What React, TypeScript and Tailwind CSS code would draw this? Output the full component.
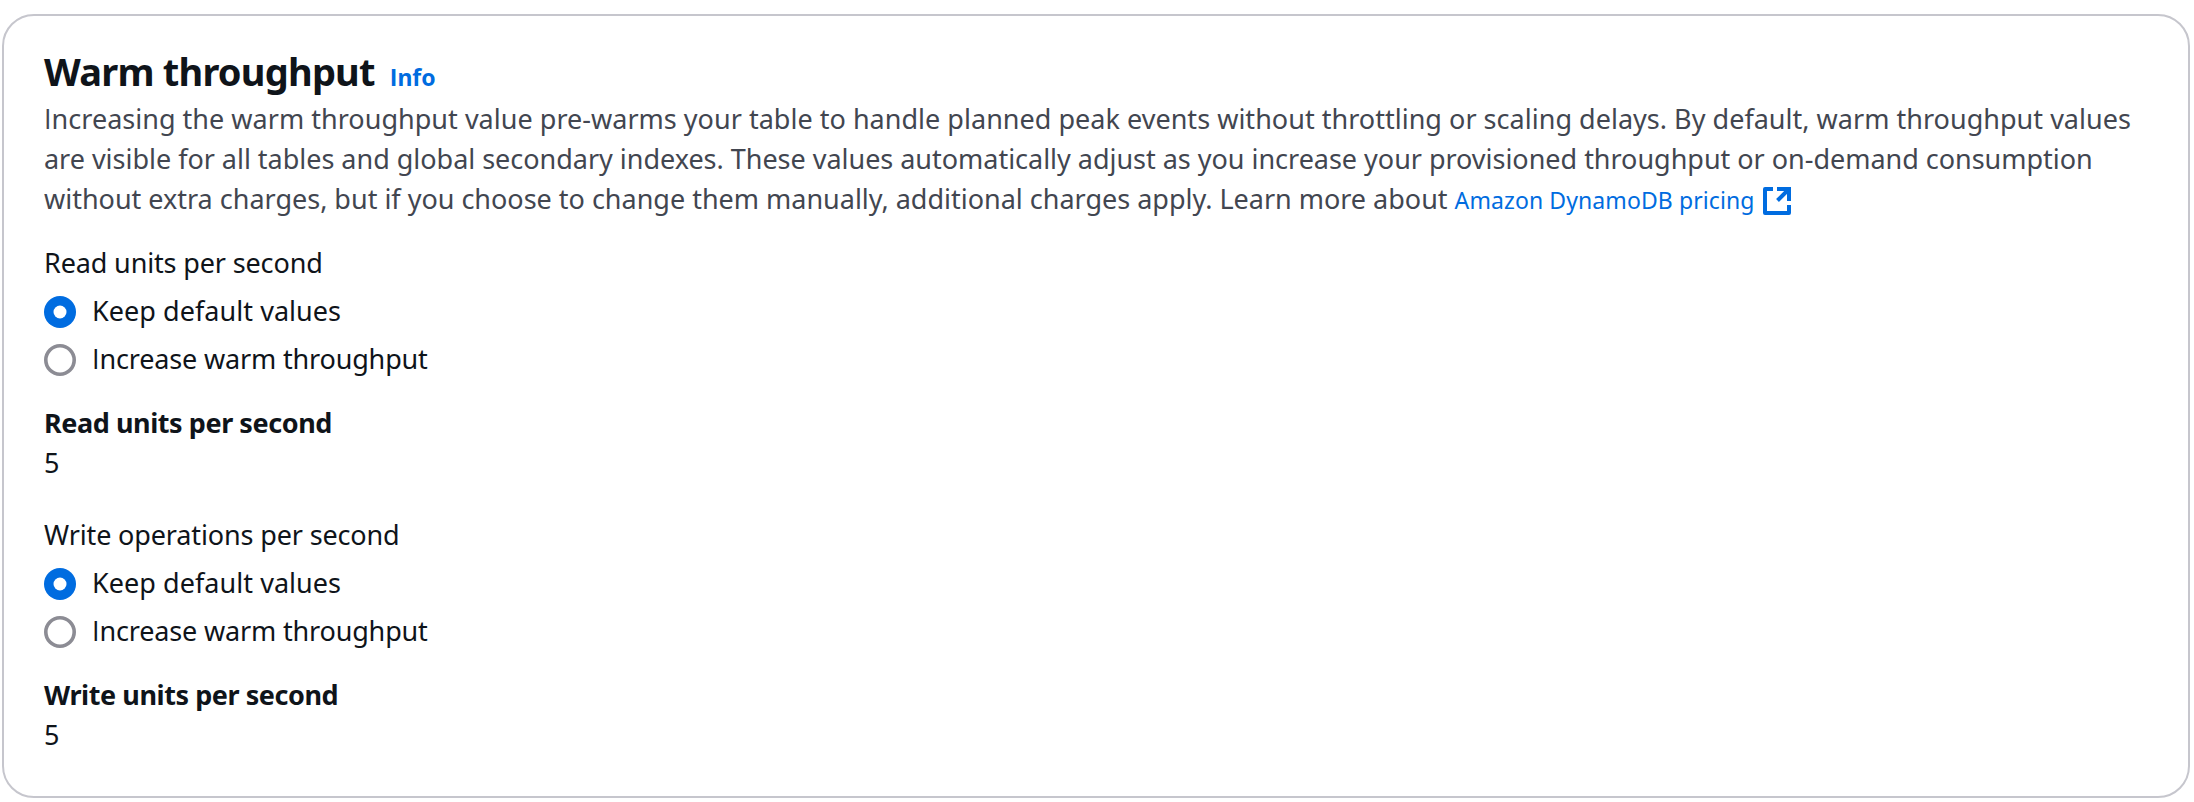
import type { ReactNode } from "react";

type FieldProps = {
  label: string;
  valueLabel: string;
  value: string;
};

// Capital I without serifs.
function PlainI() {
  return <span className="font-['Open_Sans']">I</span>;
}

function Radio({ label, checked }: { label: ReactNode; checked?: boolean }) {
  return (
    <label className="flex h-10 items-center gap-4">
      <svg viewBox="0 0 32 32" className="mt-0.5 size-8 shrink-0">
        {checked ? (
          <>
            <circle cx="16" cy="16" r="16" fill="#006ce0" />
            <circle cx="16" cy="16" r="6.5" fill="#ffffff" />
          </>
        ) : (
          <circle cx="16" cy="16" r="14.2" fill="#ffffff" stroke="#8c8c94" strokeWidth="3.6" />
        )}
      </svg>
      <span className={checked ? "tracking-[0.05px]" : "tracking-[-0.16px]"}>{label}</span>
    </label>
  );
}

function ThroughputField({ label, valueLabel, value }: FieldProps) {
  return (
    <section>
      <div className="flex flex-col gap-2">
        <p className="tracking-[-0.14px]">{label}</p>
        <Radio label="Keep default values" checked />
        <Radio
          label={
            <>
              <PlainI />
              ncrease warm throughput
            </>
          }
        />
      </div>
      <div className="mt-6">
        <p className="font-bold tracking-[-0.43px]">{valueLabel}</p>
        <p>{value}</p>
      </div>
    </section>
  );
}

function ExternalIcon() {
  return (
    <svg viewBox="0 0 28 28" className="ml-2 inline-block size-7 align-[-6px]" fill="none" stroke="#006ce0" strokeWidth="4">
      <path d="M10 2H2V26H26V18" strokeLinejoin="round" />
      <path d="M14 2H26V14M26 2L14.5 13.5" />
    </svg>
  );
}

export default function App() {
  return (
    <div className="h-[802px] w-[2194px] bg-white pt-3.5 pl-0.5 font-['Noto_Sans','Open_Sans',sans-serif] text-[27px] leading-10 text-[#0f141a]">
      <main className="h-[784px] w-[2188px] rounded-[32px] border-2 border-[#c6c6cd] px-10 pt-[31px]">
        <header>
          <div className="flex h-[52px] items-baseline">
            <h2 className="text-[38px] leading-12 font-bold tracking-[-0.78px]">Warm throughput</h2>
            <a className="ml-[15px] text-[23px] leading-8 font-bold text-[#006ce0]">
              <PlainI />
              nfo
            </a>
          </div>
          <p className="whitespace-nowrap text-[#424650]">
            <span className="tracking-[0.02px]">
              <PlainI />
              ncreasing the warm throughput value pre-warms your table to handle planned peak events without throttling or scaling delays. By default, warm throughput values
            </span>
            <br />
            <span className="tracking-[-0.022px]">
              are visible for all tables and global secondary indexes. These values automatically adjust as you increase your provisioned throughput or on-demand consumption
            </span>
            <br />
            <span className="tracking-[-0.01px]">
              without extra charges, but if you choose to change them manually, additional charges apply. Learn more about{" "}
            </span>
            <a className="text-[23px] leading-8 tracking-[0.1px] text-[#006ce0]">
              Amazon DynamoDB pricing
              <ExternalIcon />
            </a>
          </p>
        </header>
        <div className="mt-6 flex flex-col gap-8">
          <ThroughputField label="Read units per second" valueLabel="Read units per second" value="5" />
          <ThroughputField label="Write operations per second" valueLabel="Write units per second" value="5" />
        </div>
      </main>
    </div>
  );
}
